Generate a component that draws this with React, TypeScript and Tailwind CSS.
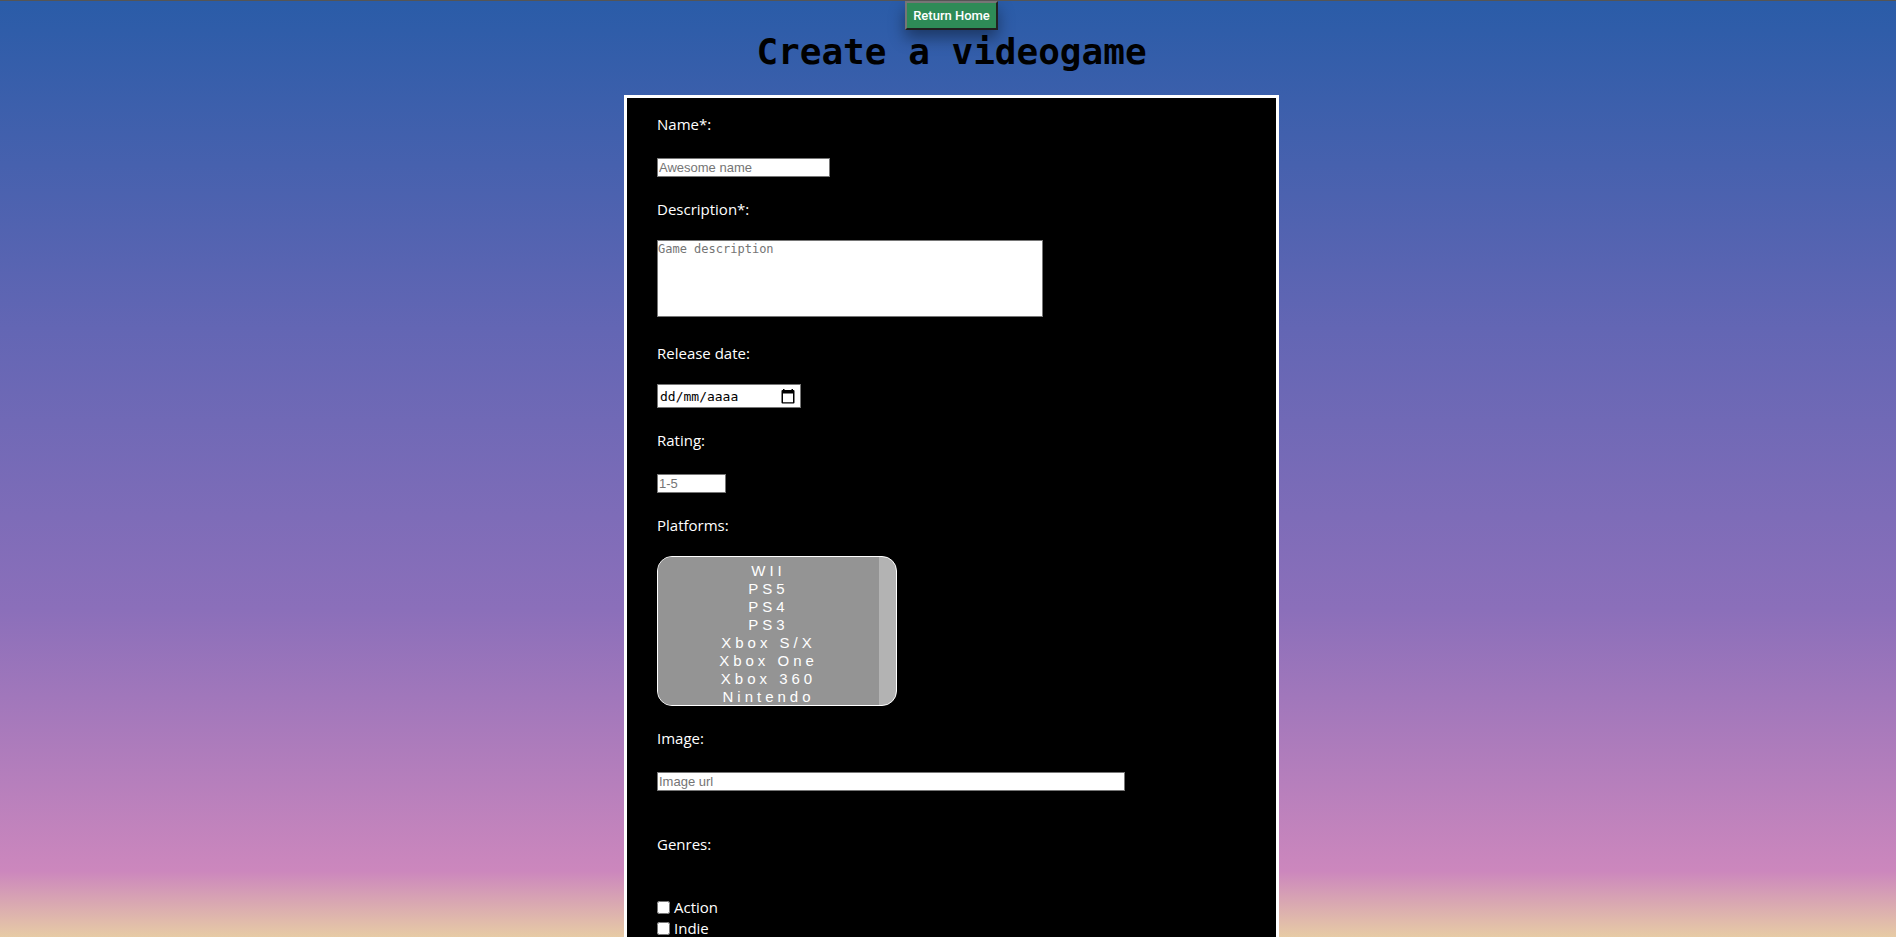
import React from "react";
import type { ReactNode } from "react";

const platforms = ["WII", "PS5", "PS4", "PS3", "Xbox S/X", "Xbox One", "Xbox 360", "Nintendo"];
const genres = ["Action", "Indie"];

const box =
  "block rounded-none border border-[#767676] bg-white text-black placeholder:text-[#757575] placeholder:opacity-100";
const textBox = `${box} h-[19px] px-px font-['Liberation_Sans',Arial,sans-serif] text-[13px] leading-[15px]`;

function Label({ htmlFor, children }: { htmlFor: string; children: ReactNode }) {
  return (
    <label htmlFor={htmlFor} className="block leading-[21px]">
      {children}
    </label>
  );
}

function CalendarIcon() {
  return (
    <svg viewBox="0 0 14 15" className="h-[15px] w-[14px]" aria-hidden="true">
      <path
        fill="#000"
        fillRule="evenodd"
        d="M2 0h1.500v1h7V0H12v1h.5A1 1 0 0 1 13.500 2v11.500a1 1 0 0 1-1 1h-11a1 1 0 0 1-1-1V2a1 1 0 0 1 1-1H2zM2 4.500v8.700h10V4.500z"
      />
    </svg>
  );
}

export default function App() {
  return (
    <main className="flex h-screen flex-col items-center overflow-hidden border-t border-[#555555] bg-[linear-gradient(180deg,#2a5ca8_0%,#6366b4_35%,#8b6fba_65%,#cc87bd_93%,#e7cba5_100%)] pl-[7px] font-['Open_Sans','Segoe_UI',sans-serif] text-[15px] text-white">
      <button
        type="button"
        className="h-[29px] shrink-0 border-2 border-t-[#767676] border-r-[#212121] border-b-[#212121] border-l-[#767676] bg-[#2e8b57] px-1.5 font-['Roboto','Liberation_Sans',sans-serif] text-[13px] leading-4 font-medium text-white shadow-[0_8px_16px_0_rgba(0,0,0,0.4)]"
      >
        Return Home
      </button>
      <h1 className="shrink-0 font-['DejaVu_Sans_Mono',monospace] text-[36px] leading-[44px] font-bold text-black">
        Create a videogame
      </h1>
      <form className="mt-[21px] w-[655px] max-w-full shrink-0 border-[3px] border-white bg-black px-[30px] pt-4 pb-6">
        <Label htmlFor="name">Name*:</Label>
        <input id="name" type="text" placeholder="Awesome name" className={`${textBox} mt-[23px] w-[173px]`} />

        <div className="mt-[22px]">
          <Label htmlFor="description">Description*:</Label>
          <textarea
            id="description"
            placeholder="Game description"
            className={`${box} mt-5 h-[77px] w-[386px] max-w-full resize-none font-['DejaVu_Sans_Mono',monospace] text-[12px] leading-4`}
          />
        </div>

        <div className="mt-[26px]">
          <Label htmlFor="released">Release date:</Label>
          <div className="mt-5 flex h-6 w-36 items-center justify-between border border-[#767676] bg-white pr-[5px] pl-0.5">
            <input
              id="released"
              type="text"
              placeholder="dd/mm/aaaa"
              className="w-24 bg-transparent pt-0.5 font-['DejaVu_Sans_Mono',monospace] text-[13px] leading-4 text-black placeholder:text-black placeholder:opacity-100"
            />
            <button type="button" aria-label="Open calendar">
              <CalendarIcon />
            </button>
          </div>
        </div>

        <div className="mt-[22px]">
          <Label htmlFor="rating">Rating:</Label>
          <input id="rating" type="text" placeholder="1-5" className={`${textBox} mt-[23px] w-[69px]`} />
        </div>

        <div className="mt-[22px]">
          <Label htmlFor="platforms">Platforms:</Label>
          <div className="mt-5 h-[150px] w-60 overflow-hidden rounded-[15px] border border-white bg-[#b3b3b3] pr-[17px]">
            <select
              id="platforms"
              multiple
              className="block h-full w-full appearance-none overflow-hidden bg-[#949494] pt-[5px] text-center font-['Liberation_Sans',Arial,sans-serif] text-[15px] tracking-[4px] text-white"
            >
              {platforms.map((name) => (
                <option key={name} className="block h-[18px] min-h-0 p-0 text-center leading-[18px]">
                  {name}
                </option>
              ))}
            </select>
          </div>
        </div>

        <div className="mt-[22px]">
          <Label htmlFor="image">Image:</Label>
          <input
            id="image"
            type="text"
            placeholder="Image url"
            className={`${textBox} mt-[23px] w-[468px] max-w-full`}
          />
        </div>

        <fieldset className="mt-[43px]">
          <legend className="mb-[42px] leading-[21px]">Genres:</legend>
          {genres.map((name) => (
            <label key={name} className="flex h-[21px] items-center gap-1 leading-[21px]">
              <input type="checkbox" className="size-[13px]" />
              {name}
            </label>
          ))}
        </fieldset>
      </form>
    </main>
  );
}
